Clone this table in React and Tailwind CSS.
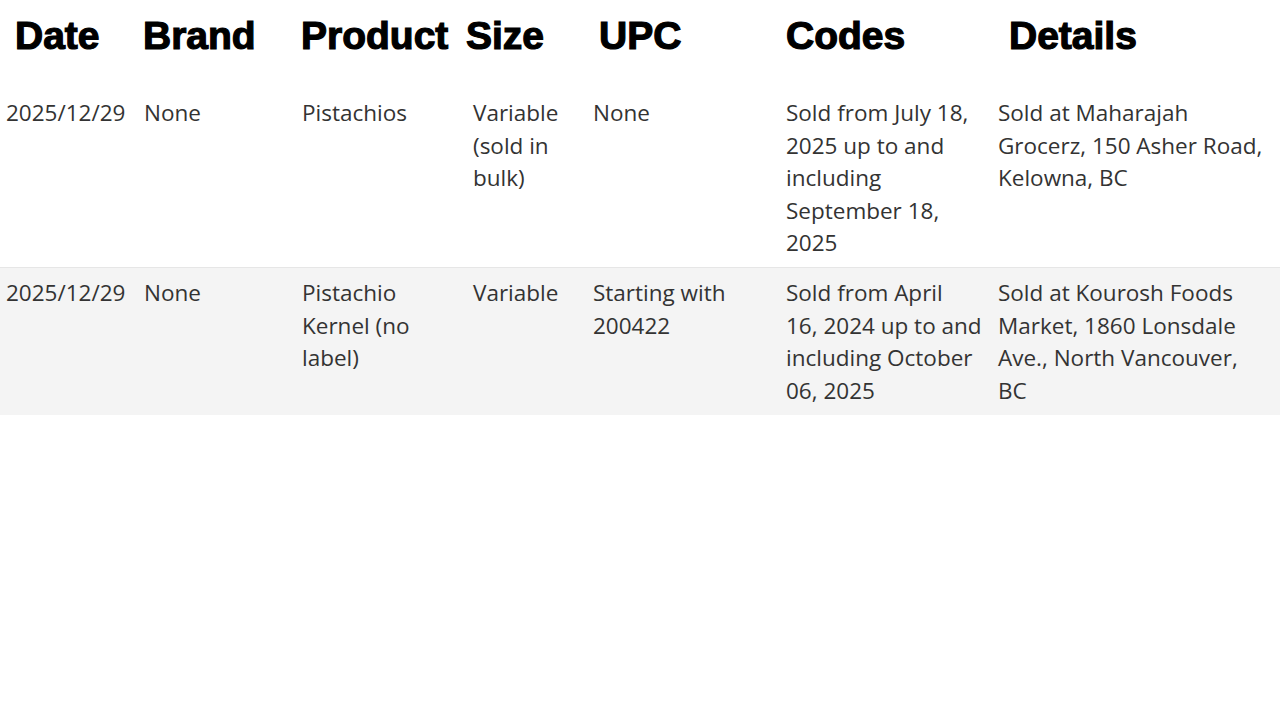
export default function App() {
  const heads = ["Date", "Brand", "Product", "Size", "UPC", "Codes", "Details"];
  const rows = [
    {
      bg: "bg-white",
      cells: [
        ["2025/12/29"],
        ["None"],
        ["Pistachios"],
        ["Variable", "(sold in", "bulk)"],
        ["None"],
        ["Sold from July 18,", "2025 up to and", "including", "September 18,", "2025"],
        ["Sold at Maharajah", "Grocerz, 150 Asher Road,", "Kelowna, BC"],
      ],
    },
    {
      bg: "bg-[#f4f4f4]",
      cells: [
        ["2025/12/29"],
        ["None"],
        ["Pistachio", "Kernel (no", "label)"],
        ["Variable"],
        ["Starting with", "200422"],
        ["Sold from April", "16, 2024 up to and", "including October", "06, 2025"],
        ["Sold at Kourosh Foods", "Market, 1860 Lonsdale", "Ave., North Vancouver,", "BC"],
      ],
    },
  ];
  return (
    <div className="w-[1280px] h-[725px] bg-white overflow-hidden">
      <div
        className="grid grid-cols-[128px_158px_165px_133px_187px_223px_1fr] pl-[15px] h-[88px] pt-[13px] text-black font-bold text-[39px] leading-[46px] [-webkit-text-stroke:1.2px_black]"
        style={{ fontFamily: '"Liberation Sans", Arial, sans-serif' }}
      >
        {heads.map((h) => (
          <div key={h}>{h}</div>
        ))}
      </div>
      <div
        className="text-[22.5px] leading-[32.5px] text-[#333333]"
        style={{ fontFamily: '"Open Sans", "Noto Sans", sans-serif' }}
      >
        {rows.map((r, i) => (
          <div
            key={i}
            className={`grid grid-cols-[138px_158px_171px_120px_193px_212px_1fr] ${r.bg} ${
              i === 0 ? "border-b border-[#e6e6e6]" : ""
            }`}
          >
            {r.cells.map((lines, j) => (
              <div key={j} className="px-[6px] pt-[9px] pb-[7.5px] whitespace-nowrap">
                {lines.map((l, k) => (
                  <div key={k}>{l}</div>
                ))}
              </div>
            ))}
          </div>
        ))}
      </div>
    </div>
  );
}
